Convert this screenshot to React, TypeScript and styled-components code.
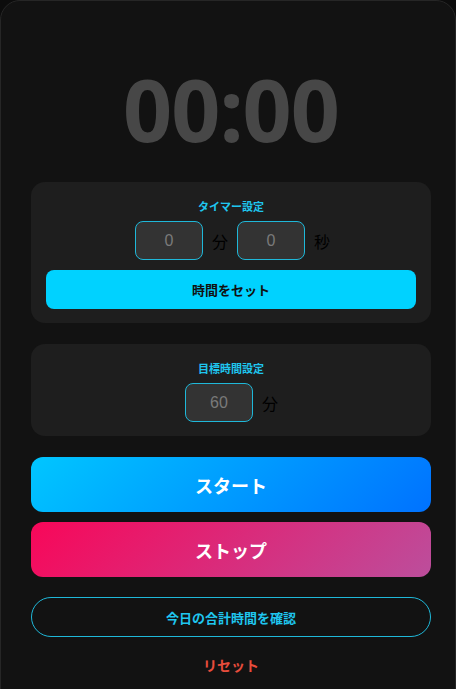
import { FC } from 'react';
import styled, { createGlobalStyle } from 'styled-components';

const GlobalStyle = createGlobalStyle`
  * {
    box-sizing: border-box;
  }

  body {
    margin: 0;
    background-color: #0c0c0c;
    font-family: 'Noto Sans CJK JP', 'Noto Sans', sans-serif;
  }
`;

type NumberFieldProps = {
  value: string;
  unit: string;
};

const NumberField: FC<NumberFieldProps> = ({ value, unit }) => {
  return (
    <>
      <Field readOnly value={value} />
      <Unit>{unit}</Unit>
    </>
  );
};

const App: FC = () => {
  return (
    <>
      <GlobalStyle />
      <Card>
        <Display>00:00</Display>

        <Panel>
          <PanelTitle>タイマー設定</PanelTitle>
          <FieldRow $shift={3}>
            <NumberField value="0" unit="分" />
            <NumberField value="0" unit="秒" />
          </FieldRow>
          <SetButton>時間をセット</SetButton>
        </Panel>

        <Panel $gapTop={21}>
          <PanelTitle>目標時間設定</PanelTitle>
          <FieldRow $shift={1}>
            <NumberField value="60" unit="分" />
          </FieldRow>
        </Panel>

        <BigButton $from="#00c6ff" $to="#0072ff" $gapTop={21}>
          スタート
        </BigButton>
        <BigButton $from="#f80759" $to="#bc4e9c">
          ストップ
        </BigButton>

        <OutlineButton>今日の合計時間を確認</OutlineButton>
        <ResetLink>リセット</ResetLink>
      </Card>
    </>
  );
};

export default App;

const Card = styled.div`
  display: flex;
  flex-direction: column;
  min-height: 720px;
  padding: 0 24px 20px 30px;
  border: 1px solid #262626;
  border-radius: 20px;
  background-color: #121212;
`;

const Display = styled.h1`
  margin: 62px 0 27px;
  font-family: 'Noto Sans', 'Open Sans', sans-serif;
  font-size: 86px;
  font-weight: 700;
  line-height: 92px;
  letter-spacing: -1px;
  text-align: center;
  color: #474747;
`;

const Panel = styled.div<{ $gapTop?: number }>`
  display: flex;
  flex-direction: column;
  align-items: center;
  margin-top: ${({ $gapTop }) => $gapTop ?? 0}px;
  padding: 16px 15px 14px;
  width: 400px;
  border-radius: 14px;
  background-color: #1e1e1e;
`;

const PanelTitle = styled.h2`
  margin: 0 0 7px;
  font-size: 11px;
  font-weight: 700;
  line-height: 16px;
  color: #1fc6ef;
`;

const FieldRow = styled.div<{ $shift?: number }>`
  display: flex;
  align-items: center;
  justify-content: center;
  margin-left: ${({ $shift }) => $shift ?? 0}px;
`;

const Field = styled.input`
  width: 68px;
  height: 39px;
  padding: 0;
  border: 1px solid #1fb8d9;
  border-radius: 8px;
  background-color: #333;
  font-family: 'Liberation Sans', Arial, sans-serif;
  font-size: 16px;
  text-align: center;
  color: #7a7a7a;
  outline: none;
`;

const Unit = styled.span`
  margin: 0 9px;
  font-size: 16px;
  color: #000;

  &:last-child {
    margin-right: 0;
  }
`;

const SetButton = styled.button`
  align-self: stretch;
  height: 39px;
  margin-top: 10px;
  border: none;
  border-radius: 8px;
  background-color: #00d2ff;
  font-family: inherit;
  font-size: 13px;
  font-weight: 700;
  color: #111;
`;

const BigButton = styled.button<{ $from: string; $to: string; $gapTop?: number }>`
  width: 400px;
  height: 55px;
  margin-top: ${({ $gapTop }) => $gapTop ?? 10}px;
  border: none;
  border-radius: 12px;
  background: linear-gradient(135deg, ${({ $from }) => $from}, ${({ $to }) => $to});
  font-family: inherit;
  font-size: 18px;
  font-weight: 700;
  color: #fff;
`;

const OutlineButton = styled.button`
  width: 400px;
  height: 40px;
  margin-top: 20px;
  border: 1px solid #1fb8d9;
  border-radius: 20px;
  background: transparent;
  font-family: inherit;
  font-size: 13px;
  font-weight: 700;
  color: #1fc6ef;
`;

const ResetLink = styled.button`
  align-self: center;
  margin-top: 18px;
  padding: 0;
  border: none;
  background: none;
  font-family: inherit;
  font-size: 14px;
  font-weight: 700;
  color: #e74c3c;
`;
